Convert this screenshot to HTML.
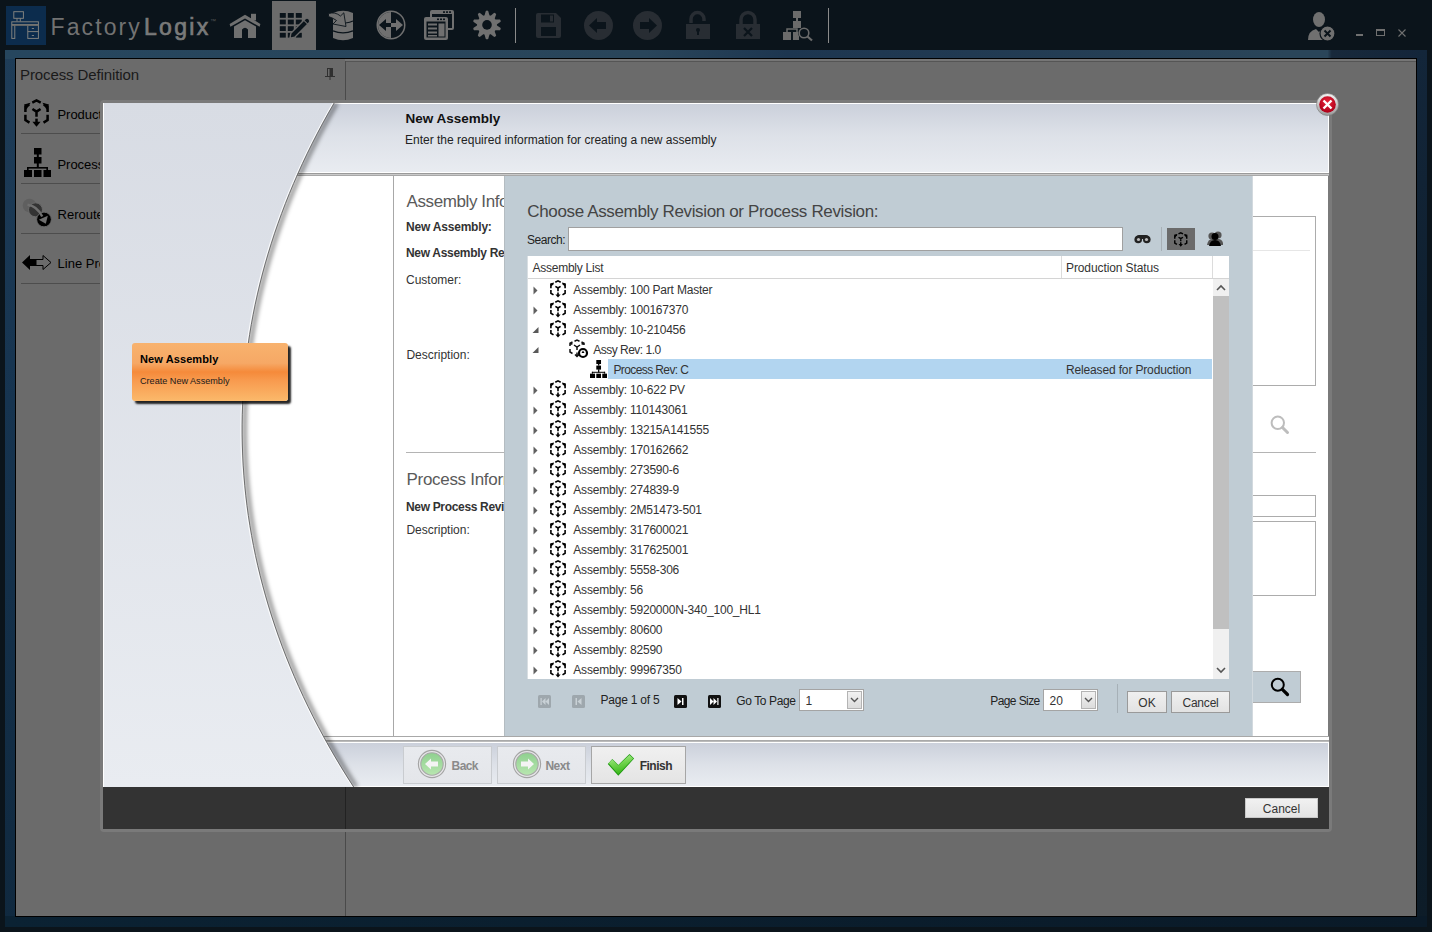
<!DOCTYPE html><html><head><meta charset="utf-8"><style>
html,body{margin:0;padding:0;width:1432px;height:932px;overflow:hidden;background:#0b141b;}
.t{position:absolute;white-space:nowrap;line-height:1;font-family:"Liberation Sans", sans-serif;}
svg{overflow:visible}
</style></head><body>
<div style="position:absolute;left:0px;top:0px;width:1432px;height:50px;background:#0b141b"></div>
<div style="position:absolute;left:6px;top:6px;width:40px;height:39px;background:#0c2c4d"></div>
<svg style="position:absolute;left:6px;top:6px;" width="40" height="39" viewBox="0 0 40 39"><g fill="none" stroke="#858480" stroke-width="0.95"><rect x="7.8" y="5.7" width="9.6" height="6.6"/><path d="M11 12.3 V15.3 M14.3 12.3 V15.3"/><rect x="5.8" y="15.8" width="26.6" height="2.8"/><rect x="5.8" y="19.2" width="3" height="13.2"/><rect x="21.8" y="19.2" width="10.6" height="13.2"/><path d="M21.8 25.6 H32.4"/></g><rect x="6" y="18.6" width="26.4" height="1.3" fill="#6a6a68"/><g fill="#858480"><rect x="25.8" y="22" width="2.2" height="0.9"/><rect x="25.8" y="29" width="2.2" height="0.9"/></g></svg>
<div class="t" style="left:50.5px;top:15.73px;font-size:23px;color:#727272;font-weight:normal;letter-spacing:2.1px;">Factory</div>
<div class="t" style="left:144.0px;top:15.73px;font-size:23px;color:#7a7a7a;font-weight:normal;letter-spacing:2.3px;-webkit-text-stroke:0.7px #7a7a7a">Logix</div>
<div class="t" style="left:210.0px;top:17.92px;font-size:6px;color:#555;font-weight:normal;letter-spacing:0px;">&#8482;</div>
<div style="position:absolute;left:272px;top:1px;width:44px;height:49px;background:#6b6b6b"></div>
<svg style="position:absolute;left:225px;top:8px;" width="40" height="34" viewBox="0 0 40 34"><g fill="#707070"><path d="M4.6 15.9 L20 6.8 L35.4 15.9 L34.6 18.7 L20 10.4 L5.4 18.7 Z"/><rect x="26" y="5.8" width="5" height="6.6"/><path d="M9 18.4 L20 12.2 L31 18.4 V30 H23 V21.5 Q20 17.8 17 21.5 V30 H9 Z"/></g></svg>
<svg style="position:absolute;left:279px;top:12px;" width="32" height="28" viewBox="0 0 32 28"><g fill="#0b141b"><rect x="0.8" y="1.0" width="6" height="4.8"/><rect x="8.8" y="1.0" width="6" height="4.8"/><rect x="16.8" y="1.0" width="6" height="4.8"/><rect x="0.8" y="7.6" width="6" height="4.8"/><rect x="8.8" y="7.6" width="6" height="4.8"/><rect x="16.8" y="7.6" width="6" height="4.8"/><rect x="0.8" y="14.2" width="6" height="4.8"/><rect x="8.8" y="14.2" width="6" height="4.8"/><rect x="16.8" y="14.2" width="6" height="4.8"/><rect x="0.8" y="20.799999999999997" width="6" height="4.8"/><rect x="8.8" y="20.799999999999997" width="6" height="4.8"/><rect x="16.8" y="20.799999999999997" width="6" height="4.8"/></g><path d="M11 26.2 L11.85 21.25 L26.05 7.05 Q28 5.1 29.95 7.05 Q31.9 9 29.95 10.95 L15.75 25.15 Z" fill="#0b141b" stroke="#6b6b6b" stroke-width="1.4"/><path d="M24.9 8.3 L28.7 12.1" stroke="#6b6b6b" stroke-width="1.1"/></svg>
<svg style="position:absolute;left:325px;top:5px;" width="35" height="40" viewBox="0 0 35 40"><path d="M8 8 Q18 3.5 28 8 V33 Q18 37.5 8 33 Z" fill="#707070"/><path d="M8 25.8 Q18 29.8 28 25.8" stroke="#0b141b" stroke-width="1.3" fill="none"/><path d="M20.5 18 Q25 17.5 28 16" stroke="#0b141b" stroke-width="1.1" fill="none"/><path d="M3.5 8.5 Q10 6.5 15.5 11 L18.8 7.8 L21 21.5 L8 19 L11.5 15.5 Q8 13 3.5 11.5 Z" fill="#707070" stroke="#0b141b" stroke-width="0.9"/></svg>
<svg style="position:absolute;left:376px;top:10px;" width="30" height="30" viewBox="0 0 30 30"><circle cx="15" cy="15" r="14.5" fill="#707070"/><circle cx="15" cy="15" r="13" fill="#0b141b"/><path d="M15 2 A13 13 0 0 0 15 28 Z" fill="#707070"/><path d="M3 15 L10 9 V13 H15 V17 H10 V21 Z" fill="#0b141b"/><path d="M27 15 L20 9 V13 H15 V17 H20 V21 Z" fill="#707070"/></svg>
<svg style="position:absolute;left:424px;top:10px;" width="30" height="30" viewBox="0 0 30 30"><g fill="#707070"><rect x="6" y="0" width="24" height="20" rx="2"/></g><rect x="8" y="4" width="20" height="14" fill="#0b141b"/><g fill="#0b141b"><rect x="19" y="1.3" width="2" height="1.6"/><rect x="22" y="1.3" width="2" height="1.6"/><rect x="25" y="1.3" width="2" height="1.6"/></g><rect x="0" y="7" width="24" height="23" rx="2" fill="#707070"/><rect x="2.5" y="11.5" width="19" height="16" fill="#0b141b"/><g fill="#0b141b"><rect x="13" y="8.5" width="2" height="1.6"/><rect x="16" y="8.5" width="2" height="1.6"/><rect x="19" y="8.5" width="2" height="1.6"/></g><g fill="#707070"><rect x="4" y="13.5" width="9" height="2"/><rect x="4" y="17.5" width="9" height="2"/><rect x="4" y="21.5" width="9" height="2"/><rect x="4" y="25" width="9" height="1.5"/><rect x="14.5" y="13.5" width="6" height="13"/></g></svg>
<svg style="position:absolute;left:473px;top:10px;" width="28" height="30" viewBox="0 0 28 30"><g fill="#707070"><path d="M11.2 6.4 L12.8 0.9 Q14 0.3 15.2 0.9 L16.8 6.4 Z" transform="rotate(0 14 14.9)"/><path d="M11.2 6.4 L12.8 0.9 Q14 0.3 15.2 0.9 L16.8 6.4 Z" transform="rotate(36 14 14.9)"/><path d="M11.2 6.4 L12.8 0.9 Q14 0.3 15.2 0.9 L16.8 6.4 Z" transform="rotate(72 14 14.9)"/><path d="M11.2 6.4 L12.8 0.9 Q14 0.3 15.2 0.9 L16.8 6.4 Z" transform="rotate(108 14 14.9)"/><path d="M11.2 6.4 L12.8 0.9 Q14 0.3 15.2 0.9 L16.8 6.4 Z" transform="rotate(144 14 14.9)"/><path d="M11.2 6.4 L12.8 0.9 Q14 0.3 15.2 0.9 L16.8 6.4 Z" transform="rotate(180 14 14.9)"/><path d="M11.2 6.4 L12.8 0.9 Q14 0.3 15.2 0.9 L16.8 6.4 Z" transform="rotate(216 14 14.9)"/><path d="M11.2 6.4 L12.8 0.9 Q14 0.3 15.2 0.9 L16.8 6.4 Z" transform="rotate(252 14 14.9)"/><path d="M11.2 6.4 L12.8 0.9 Q14 0.3 15.2 0.9 L16.8 6.4 Z" transform="rotate(288 14 14.9)"/><path d="M11.2 6.4 L12.8 0.9 Q14 0.3 15.2 0.9 L16.8 6.4 Z" transform="rotate(324 14 14.9)"/><circle cx="14" cy="14.9" r="10"/></g><circle cx="14" cy="14.9" r="4.8" fill="#0b141b"/></svg>
<div style="position:absolute;left:515px;top:8px;width:1px;height:35px;background:#8a8a8a"></div>
<div style="position:absolute;left:828px;top:8px;width:1px;height:35px;background:#8a8a8a"></div>
<svg style="position:absolute;left:536px;top:13px;" width="25" height="25" viewBox="0 0 25 25"><path fill="#282d33" d="M2 0 H20 L25 5 V23 Q25 25 23 25 H2 Q0 25 0 23 V2 Q0 0 2 0Z"/><rect x="5" y="1.5" width="13" height="8" fill="#0b141b"/><rect x="14" y="2.5" width="3" height="6" fill="#282d33"/><rect x="5" y="14" width="15" height="9" fill="#0b141b"/></svg>
<svg style="position:absolute;left:584px;top:11px;" width="29" height="29" viewBox="0 0 29 29"><circle cx="14.5" cy="14.5" r="14.5" fill="#282d33"/><path d="M5 14.5 L13 7 V11 H22 V18 H13 V22Z" fill="#0b141b"/></svg>
<svg style="position:absolute;left:633px;top:11px;" width="29" height="29" viewBox="0 0 29 29"><circle cx="14.5" cy="14.5" r="14.5" fill="#282d33"/><path d="M24 14.5 L16 7 V11 H7 V18 H16 V22Z" fill="#0b141b"/></svg>
<svg style="position:absolute;left:686px;top:11px;" width="25" height="29" viewBox="0 0 25 29"><path d="M12 12 V8 A6.5 6.5 0 0 1 25 8 V10" fill="none" stroke="#282d33" stroke-width="3.5" transform="translate(-7,0)"/><rect x="0" y="13" width="24" height="15" fill="#282d33"/><circle cx="12" cy="19" r="2" fill="#0b141b"/><rect x="11" y="19" width="2" height="5" fill="#0b141b"/></svg>
<svg style="position:absolute;left:736px;top:11px;" width="24" height="29" viewBox="0 0 24 29"><path d="M5 13 V8.5 A7 7 0 0 1 19 8.5 V13" fill="none" stroke="#282d33" stroke-width="3.5"/><rect x="0" y="13" width="24" height="15" fill="#282d33"/><path d="M8 17 L16 25 M16 17 L8 25" stroke="#0b141b" stroke-width="2.2"/></svg>
<svg style="position:absolute;left:783px;top:11px;" width="30" height="30" viewBox="0 0 30 30"><g fill="#6b6b6b"><rect x="10" y="0" width="8" height="7"/><rect x="13" y="7" width="2" height="3"/><rect x="10" y="10" width="8" height="7"/><rect x="0" y="21" width="8" height="8"/><rect x="10" y="21" width="6" height="8"/><path d="M4 21 V18 H14 V21" fill="none" stroke="#6b6b6b" stroke-width="1.5"/></g><circle cx="21" cy="22" r="6" fill="#0b141b"/><circle cx="21" cy="22" r="4.8" fill="none" stroke="#6b6b6b" stroke-width="1.6"/><path d="M24.5 25.5 L29 29.5" stroke="#6b6b6b" stroke-width="2.2"/></svg>
<svg style="position:absolute;left:1308px;top:12px;" width="28" height="30" viewBox="0 0 28 30"><ellipse cx="11" cy="7.5" rx="6" ry="7.5" fill="#707070"/><path d="M0 28 Q0 19 8 17 L11 20 L14 17 Q20 18 22 22 V28Z" fill="#707070"/><circle cx="19.5" cy="21.5" r="7.5" fill="#707070" stroke="#0b141b" stroke-width="1.2"/><path d="M16.5 18.5 L22.5 24.5 M22.5 18.5 L16.5 24.5" stroke="#0b141b" stroke-width="2"/></svg>
<div style="position:absolute;left:1356px;top:34px;width:7px;height:2px;background:#707070"></div>
<div style="position:absolute;left:1376px;top:29px;width:9px;height:7px;border:1px solid #707070;border-top-width:2px;box-sizing:border-box"></div>
<svg style="position:absolute;left:1398px;top:29px;" width="8" height="8" viewBox="0 0 8 8"><path d="M0.5 0.5 L7.5 7.5 M7.5 0.5 L0.5 7.5" stroke="#707070" stroke-width="1.1"/></svg>
<div style="position:absolute;left:5px;top:50px;width:1422px;height:877px;background:linear-gradient(180deg,#1f3d58 0%,#163450 40%,#10293f 100%)"></div>
<div style="position:absolute;left:5px;top:50px;width:1422px;height:9px;background:linear-gradient(90deg,#26465e 0%,#29455a 45%,#1d3650 55%,#213a52 68%,#2a4559 90%,#2a4559 93%,#18293b 93.3%,#13253a 100%)"></div>
<div style="position:absolute;left:1416px;top:50px;width:11px;height:877px;background:linear-gradient(180deg,#13263a,#0f2030 30%,#0d1c28)"></div>
<div style="position:absolute;left:5px;top:916px;width:1422px;height:11px;background:linear-gradient(90deg,#0b2233,#0a1a28)"></div>
<div style="position:absolute;left:15px;top:58px;width:1402px;height:859px;background:#000"></div>
<div style="position:absolute;left:16px;top:59px;width:1400px;height:857px;background:#6b6b6b"></div>
<div class="t" style="left:20.0px;top:67.30px;font-size:15px;color:#1a1a1a;font-weight:normal;letter-spacing:-0.1px;">Process Definition</div>
<svg style="position:absolute;left:325px;top:68px;" width="10" height="12" viewBox="0 0 10 12"><path d="M2 0H8V8H10V9H5.5V12H4.5V9H0V8H2Z" fill="#303030"/><rect x="3" y="1" width="1.5" height="7" fill="#6b6b6b"/></svg>
<div style="position:absolute;left:345px;top:59px;width:1px;height:857px;background:#4a4a4a"></div>
<div style="position:absolute;left:346px;top:61px;width:1070px;height:1px;background:#555"></div>
<div style="position:absolute;left:345px;top:59px;width:1071px;height:2px;background:#767676"></div>
<svg style="position:absolute;left:24px;top:99px;" width="25" height="28.5" viewBox="0 0 25 28.5"><svg x="0" y="0" width="25" height="28.5" viewBox="0 0 16 18" preserveAspectRatio="none"><g fill="none" stroke="#000" stroke-width="1.6"><path d="M5.3 2.3 L8 0.9 L10.7 2.3"/><path d="M0.9 8.2 V4.8 L3.4 3.5"/><path d="M15.1 8.2 V4.8 L12.6 3.5"/><path d="M0.9 10 V13.3 L3.5 14.9"/><path d="M15.1 10 V13.3 L12.5 14.9"/><path d="M5.4 6.3 L8 8 L10.6 6.3 M8 8 V11.2"/><path d="M8 12.4 V16"/></g><g fill="#000"><path d="M0 3.4 L4.2 2.4 L1.6 6.6 Z"/><path d="M16 3.4 L11.8 2.4 L14.4 6.6 Z"/><path d="M5.4 14.4 H10.6 L8 17.6 Z"/></g></svg></svg>
<div class="t" style="left:57.4px;top:107.80px;font-size:13px;color:#000;font-weight:normal;letter-spacing:0px;">Product</div>
<div style="position:absolute;left:21px;top:133px;width:320px;height:1px;background:#4d4d4d"></div>
<svg style="position:absolute;left:23.5px;top:148px;" width="27" height="29" viewBox="0 0 27 29"><g fill="#000" transform="scale(1.0000,1.0000)"><rect x="10" y="0" width="7.5" height="6.5"/><rect x="12.8" y="6" width="2" height="3"/><rect x="10" y="9" width="7.5" height="6.5"/><rect x="12.8" y="15" width="2" height="5"/><rect x="3" y="19" width="21" height="1.6"/><rect x="3" y="19" width="1.6" height="3"/><rect x="22.4" y="19" width="1.6" height="3"/><rect x="0" y="22" width="8" height="7"/><rect x="10" y="22" width="7.5" height="7"/><rect x="19.5" y="22" width="7.5" height="7"/></g></svg>
<div class="t" style="left:57.4px;top:157.70px;font-size:13px;color:#000;font-weight:normal;letter-spacing:0px;">Process</div>
<div style="position:absolute;left:21px;top:183px;width:320px;height:1px;background:#4d4d4d"></div>
<svg style="position:absolute;left:20px;top:195px;" width="35" height="35" viewBox="0 0 35 35"><circle cx="9.5" cy="10.5" r="6.8" fill="#5f5f5f"/><circle cx="15.5" cy="14.8" r="7" fill="#333" stroke="#6b6b6b" stroke-width="1"/><circle cx="24" cy="24.5" r="7.4" fill="#000" stroke="#6b6b6b" stroke-width="1"/><path d="M7.5 9.8 Q17 11 22.2 21.5" stroke="#6f6f6f" stroke-width="2.4" fill="none"/><path d="M18.8 24.8 L27.8 20.8 L25.8 28.8 Z" fill="#6f6f6f"/></svg>
<div class="t" style="left:57.6px;top:207.70px;font-size:13px;color:#000;font-weight:normal;letter-spacing:0px;">Reroute</div>
<div style="position:absolute;left:21px;top:233px;width:320px;height:1px;background:#4d4d4d"></div>
<svg style="position:absolute;left:22px;top:255px;" width="30" height="15" viewBox="0 0 30 15"><path d="M0 7.5 L8 0 V4 H14 V11 H8 V15 Z" fill="#000"/><path d="M29 7.5 L21 0.5 V4.5 H14 V10.5 H21 V14.5 Z" fill="none" stroke="#000" stroke-width="1"/></svg>
<div class="t" style="left:57.6px;top:257.40px;font-size:13px;color:#000;font-weight:normal;letter-spacing:0px;">Line Production</div>
<div style="position:absolute;left:21px;top:283px;width:320px;height:1px;background:#4d4d4d"></div>
<div style="position:absolute;left:100px;top:100px;width:1232px;height:732px;background:#7a7a7a;border-radius:4px"></div>
<div style="position:absolute;left:103px;top:103px;width:1226px;height:70px;background:linear-gradient(180deg,#cbd0db 0%,#dde1e8 45%,#e9ecf1 100%);border-top:1px solid #fff;box-sizing:border-box;border-right:1px solid #fff"></div>
<div style="position:absolute;left:103px;top:172px;width:1226px;height:1px;background:#fff"></div>
<div style="position:absolute;left:103px;top:173px;width:1226px;height:1px;background:#9a9a9a"></div>
<div style="position:absolute;left:103px;top:174px;width:1226px;height:1px;background:#cacaca"></div>
<div style="position:absolute;left:103px;top:175px;width:1226px;height:1px;background:#a8a8a8"></div>
<div style="position:absolute;left:103px;top:176px;width:1225px;height:560px;background:#fff"></div>
<div style="position:absolute;left:103px;top:736px;width:1226px;height:1px;background:#a8a8a8"></div>
<div style="position:absolute;left:103px;top:737px;width:1226px;height:3px;background:#fff"></div>
<div style="position:absolute;left:103px;top:740px;width:1226px;height:2px;background:linear-gradient(180deg,#a0a0a0,#c4c4c4)"></div>
<div style="position:absolute;left:103px;top:742px;width:1226px;height:45px;background:linear-gradient(180deg,#cbd0db 0%,#dde1e8 50%,#e9ecf1 100%);border:1px solid #fff;border-left:none;box-sizing:border-box"></div>
<div style="position:absolute;left:103px;top:787px;width:1226px;height:42px;background:#333333"></div>
<div style="position:absolute;left:345px;top:787px;width:1px;height:42px;background:#222"></div>
<div class="t" style="left:1245px;top:798px;width:73px;height:20px;box-sizing:border-box;background:linear-gradient(180deg,#f1f1f1,#e3e3e3);border:1px solid #c8c8c8;text-align:center;font-size:12px;line-height:18px;padding-top:1px;color:#333">Cancel</div>
<svg style="position:absolute;left:103px;top:103px;overflow:hidden" width="1226" height="684" viewBox="0 0 1226 684"><defs><linearGradient id="lg" x1="0" y1="0" x2="0" y2="1"><stop offset="0" stop-color="#d8dce4"/><stop offset="1" stop-color="#e9ecf1"/></linearGradient><filter id="sh" x="-10%" y="-10%" width="130%" height="120%"><feGaussianBlur stdDeviation="2.2"/></filter></defs><path d="M230.72 0.00 L224.95 10.06 L219.39 20.12 L214.02 30.18 L208.86 40.24 L203.89 50.29 L199.12 60.35 L194.54 70.41 L190.15 80.47 L185.95 90.53 L181.93 100.59 L178.11 110.65 L174.46 120.71 L171.00 130.76 L167.72 140.82 L164.62 150.88 L161.70 160.94 L158.95 171.00 L156.39 181.06 L154.00 191.12 L151.78 201.18 L149.74 211.24 L147.87 221.29 L146.18 231.35 L144.66 241.41 L143.31 251.47 L142.13 261.53 L141.12 271.59 L140.28 281.65 L139.62 291.71 L139.12 301.76 L138.79 311.82 L138.64 321.88 L138.65 331.94 L138.83 342.00 L139.18 352.06 L139.70 362.12 L140.40 372.18 L141.26 382.24 L142.29 392.29 L143.49 402.35 L144.87 412.41 L146.42 422.47 L148.14 432.53 L150.03 442.59 L152.09 452.65 L154.34 462.71 L156.75 472.76 L159.34 482.82 L162.11 492.88 L165.06 502.94 L168.19 513.00 L171.49 523.06 L174.98 533.12 L178.65 543.18 L182.51 553.24 L186.55 563.29 L190.78 573.35 L195.19 583.41 L199.80 593.47 L204.60 603.53 L209.60 613.59 L214.79 623.65 L220.18 633.71 L225.78 643.76 L231.57 653.82 L237.57 663.88 L243.79 673.94 L250.21 684.00" transform="translate(3,0)" fill="none" stroke="#000" stroke-opacity="0.45" stroke-width="4" filter="url(#sh)"/><path d="M0 0 L230.72 0.00 L224.95 10.06 L219.39 20.12 L214.02 30.18 L208.86 40.24 L203.89 50.29 L199.12 60.35 L194.54 70.41 L190.15 80.47 L185.95 90.53 L181.93 100.59 L178.11 110.65 L174.46 120.71 L171.00 130.76 L167.72 140.82 L164.62 150.88 L161.70 160.94 L158.95 171.00 L156.39 181.06 L154.00 191.12 L151.78 201.18 L149.74 211.24 L147.87 221.29 L146.18 231.35 L144.66 241.41 L143.31 251.47 L142.13 261.53 L141.12 271.59 L140.28 281.65 L139.62 291.71 L139.12 301.76 L138.79 311.82 L138.64 321.88 L138.65 331.94 L138.83 342.00 L139.18 352.06 L139.70 362.12 L140.40 372.18 L141.26 382.24 L142.29 392.29 L143.49 402.35 L144.87 412.41 L146.42 422.47 L148.14 432.53 L150.03 442.59 L152.09 452.65 L154.34 462.71 L156.75 472.76 L159.34 482.82 L162.11 492.88 L165.06 502.94 L168.19 513.00 L171.49 523.06 L174.98 533.12 L178.65 543.18 L182.51 553.24 L186.55 563.29 L190.78 573.35 L195.19 583.41 L199.80 593.47 L204.60 603.53 L209.60 613.59 L214.79 623.65 L220.18 633.71 L225.78 643.76 L231.57 653.82 L237.57 663.88 L243.79 673.94 L250.21 684.00 L0 684 Z" fill="url(#lg)"/><path d="M230.72 0.00 L224.95 10.06 L219.39 20.12 L214.02 30.18 L208.86 40.24 L203.89 50.29 L199.12 60.35 L194.54 70.41 L190.15 80.47 L185.95 90.53 L181.93 100.59 L178.11 110.65 L174.46 120.71 L171.00 130.76 L167.72 140.82 L164.62 150.88 L161.70 160.94 L158.95 171.00 L156.39 181.06 L154.00 191.12 L151.78 201.18 L149.74 211.24 L147.87 221.29 L146.18 231.35 L144.66 241.41 L143.31 251.47 L142.13 261.53 L141.12 271.59 L140.28 281.65 L139.62 291.71 L139.12 301.76 L138.79 311.82 L138.64 321.88 L138.65 331.94 L138.83 342.00 L139.18 352.06 L139.70 362.12 L140.40 372.18 L141.26 382.24 L142.29 392.29 L143.49 402.35 L144.87 412.41 L146.42 422.47 L148.14 432.53 L150.03 442.59 L152.09 452.65 L154.34 462.71 L156.75 472.76 L159.34 482.82 L162.11 492.88 L165.06 502.94 L168.19 513.00 L171.49 523.06 L174.98 533.12 L178.65 543.18 L182.51 553.24 L186.55 563.29 L190.78 573.35 L195.19 583.41 L199.80 593.47 L204.60 603.53 L209.60 613.59 L214.79 623.65 L220.18 633.71 L225.78 643.76 L231.57 653.82 L237.57 663.88 L243.79 673.94 L250.21 684.00" transform="translate(-0.8,0)" fill="none" stroke="#fff" stroke-width="0.9"/><path d="M230.72 0.00 L224.95 10.06 L219.39 20.12 L214.02 30.18 L208.86 40.24 L203.89 50.29 L199.12 60.35 L194.54 70.41 L190.15 80.47 L185.95 90.53 L181.93 100.59 L178.11 110.65 L174.46 120.71 L171.00 130.76 L167.72 140.82 L164.62 150.88 L161.70 160.94 L158.95 171.00 L156.39 181.06 L154.00 191.12 L151.78 201.18 L149.74 211.24 L147.87 221.29 L146.18 231.35 L144.66 241.41 L143.31 251.47 L142.13 261.53 L141.12 271.59 L140.28 281.65 L139.62 291.71 L139.12 301.76 L138.79 311.82 L138.64 321.88 L138.65 331.94 L138.83 342.00 L139.18 352.06 L139.70 362.12 L140.40 372.18 L141.26 382.24 L142.29 392.29 L143.49 402.35 L144.87 412.41 L146.42 422.47 L148.14 432.53 L150.03 442.59 L152.09 452.65 L154.34 462.71 L156.75 472.76 L159.34 482.82 L162.11 492.88 L165.06 502.94 L168.19 513.00 L171.49 523.06 L174.98 533.12 L178.65 543.18 L182.51 553.24 L186.55 563.29 L190.78 573.35 L195.19 583.41 L199.80 593.47 L204.60 603.53 L209.60 613.59 L214.79 623.65 L220.18 633.71 L225.78 643.76 L231.57 653.82 L237.57 663.88 L243.79 673.94 L250.21 684.00" transform="translate(0.5,0)" fill="none" stroke="#6e6e6e" stroke-width="1"/><rect x="0" y="0" width="1" height="684" fill="#fff"/></svg>
<div class="t" style="left:405.4px;top:111.57px;font-size:13.5px;color:#111;font-weight:bold;letter-spacing:0px;">New Assembly</div>
<div class="t" style="left:405.0px;top:133.84px;font-size:12px;color:#222;font-weight:normal;letter-spacing:0px;">Enter the required information for creating a new assembly</div>
<div style="position:absolute;left:132px;top:343px;width:156px;height:58px;border-radius:3px;background:linear-gradient(180deg,#f8b26e 0%,#f6a865 35%,#f58a3a 50%,#f89b4f 65%,#fbb96b 100%);box-shadow:3px 3px 2px rgba(0,0,0,0.85)"></div>
<div class="t" style="left:140.0px;top:353.69px;font-size:11px;color:#000;font-weight:bold;letter-spacing:0.1px;">New Assembly</div>
<div class="t" style="left:140.0px;top:376.90px;font-size:9.1px;color:#1a1a1a;font-weight:normal;letter-spacing:0px;">Create New Assembly</div>
<div style="position:absolute;left:393px;top:176px;width:1px;height:561px;background:#a8a8a8"></div>
<div class="t" style="left:406.5px;top:192.61px;font-size:17px;color:#5a5a5a;font-weight:normal;letter-spacing:-0.4px;">Assembly Information</div>
<div class="t" style="left:406.0px;top:221.24px;font-size:12px;color:#333;font-weight:bold;letter-spacing:-0.2px;">New Assembly:</div>
<div class="t" style="left:406.0px;top:247.44px;font-size:12px;color:#333;font-weight:bold;letter-spacing:-0.3px;">New Assembly Revision:</div>
<div class="t" style="left:406.0px;top:273.54px;font-size:12px;color:#333;font-weight:normal;letter-spacing:0px;">Customer:</div>
<div class="t" style="left:406.4px;top:348.54px;font-size:12px;color:#333;font-weight:normal;letter-spacing:0px;">Description:</div>
<div style="position:absolute;left:406px;top:452px;width:910px;height:1px;background:#b4b4b4"></div>
<div class="t" style="left:406.5px;top:471.21px;font-size:17px;color:#5a5a5a;font-weight:normal;letter-spacing:-0.3px;">Process Information</div>
<div class="t" style="left:406.0px;top:500.64px;font-size:12px;color:#333;font-weight:bold;letter-spacing:-0.33px;">New Process Revision:</div>
<div class="t" style="left:406.4px;top:523.74px;font-size:12px;color:#333;font-weight:normal;letter-spacing:0px;">Description:</div>
<div style="position:absolute;left:1200px;top:216px;width:116px;height:170px;border:1px solid #acacac;box-sizing:border-box;background:#fff"></div>
<div style="position:absolute;left:1200px;top:250px;width:110px;height:1px;background:#e6e6e6"></div>
<svg style="position:absolute;left:1270px;top:415px;" width="20" height="20" viewBox="0 0 20 20"><circle cx="7.8" cy="7.8" r="6.2" fill="none" stroke="#bdbdbd" stroke-width="2"/><path d="M12.5 12.5 L17.5 17.5" stroke="#bdbdbd" stroke-width="3" stroke-linecap="round"/></svg>
<div style="position:absolute;left:1200px;top:495px;width:116px;height:22px;border:1px solid #acacac;box-sizing:border-box;background:#fff"></div>
<div style="position:absolute;left:1200px;top:521px;width:116px;height:75px;border:1px solid #acacac;box-sizing:border-box;background:#fff"></div>
<div style="position:absolute;left:1200px;top:671px;width:101px;height:32px;border:1px solid #acacac;box-sizing:border-box;background:#c0ccd4"></div>
<svg style="position:absolute;left:1270px;top:677px;" width="20" height="20" viewBox="0 0 20 20"><circle cx="7.8" cy="7.8" r="6" fill="none" stroke="#000" stroke-width="2"/><path d="M12.3 12.3 L17.5 17.5" stroke="#000" stroke-width="3.2" stroke-linecap="round"/></svg>
<div style="position:absolute;left:403px;top:746px;width:89px;height:38px;box-sizing:border-box;border:1px solid #c9ccd0;background:linear-gradient(180deg,#e8eaee,#e4e6ea)"></div>
<div style="position:absolute;left:497px;top:746px;width:89px;height:38px;box-sizing:border-box;border:1px solid #c9ccd0;background:linear-gradient(180deg,#e8eaee,#e4e6ea)"></div>
<div style="position:absolute;left:591px;top:746px;width:95px;height:38px;box-sizing:border-box;border:1px solid #a6a6a6;background:linear-gradient(180deg,#f0f0f0,#e4e4e4)"></div>
<svg style="position:absolute;left:418.3px;top:750.3px;" width="28" height="28" viewBox="0 0 28 28"><defs><linearGradient id="gg" x1="0" y1="0" x2="0" y2="1"><stop offset="0" stop-color="#8fd08f"/><stop offset="1" stop-color="#b8e6b0"/></linearGradient></defs><circle cx="14" cy="14" r="13.6" fill="#e6e6e8" stroke="#a4a4a4" stroke-width="1.1"/><circle cx="14" cy="14" r="11.2" fill="url(#gg)" stroke="#a8a8a8" stroke-width="1.1"/><path d="M7 14 L13 8.5 V11.5 H20 V16.5 H13 V19.5 Z" fill="#f4f4f4"/></svg>
<div class="t" style="left:451.6px;top:760.24px;font-size:12px;color:#8a8a8a;font-weight:bold;letter-spacing:-0.6px;">Back</div>
<svg style="position:absolute;left:512.6px;top:750.3px;" width="28" height="28" viewBox="0 0 28 28"><defs><linearGradient id="gg" x1="0" y1="0" x2="0" y2="1"><stop offset="0" stop-color="#8fd08f"/><stop offset="1" stop-color="#b8e6b0"/></linearGradient></defs><circle cx="14" cy="14" r="13.6" fill="#e6e6e8" stroke="#a4a4a4" stroke-width="1.1"/><circle cx="14" cy="14" r="11.2" fill="url(#gg)" stroke="#a8a8a8" stroke-width="1.1"/><path d="M21 14 L15 8.5 V11.5 H8 V16.5 H15 V19.5 Z" fill="#f4f4f4"/></svg>
<div class="t" style="left:545.4px;top:760.24px;font-size:12px;color:#8a8a8a;font-weight:bold;letter-spacing:-0.5px;">Next</div>
<svg style="position:absolute;left:607px;top:754px;" width="28" height="23" viewBox="0 0 28 23"><defs><linearGradient id="ck" x1="0" y1="0" x2="0.3" y2="1"><stop offset="0" stop-color="#c8f0b8"/><stop offset="0.45" stop-color="#7ad858"/><stop offset="1" stop-color="#3cb81c"/></linearGradient></defs><path d="M0.8 9.9 L5.3 5 L11.3 10.9 L22.5 0.1 L27.1 4.6 L11.3 21.7 Z" fill="#1e9a10"/><path d="M1.6 9.3 L5.3 5.6 L11.3 11.4 L22.5 0.9 L26.3 4.4 L11.3 20.2 Z" fill="url(#ck)"/></svg>
<div class="t" style="left:639.7px;top:760.24px;font-size:12px;color:#333;font-weight:bold;letter-spacing:-0.5px;">Finish</div>
<div style="position:absolute;left:504px;top:176px;width:749px;height:560px;background:#c0ccd4;border-left:1px solid #b4bcc1;border-right:1px solid #d2d9de;box-sizing:border-box"></div>
<div class="t" style="left:527.3px;top:203.31px;font-size:17px;color:#444;font-weight:normal;letter-spacing:-0.35px;">Choose Assembly Revision or Process Revision:</div>
<div class="t" style="left:527.0px;top:234.04px;font-size:12px;color:#222;font-weight:normal;letter-spacing:-0.45px;">Search:</div>
<div style="position:absolute;left:568px;top:227px;width:555px;height:24px;background:#fff;border:1px solid #a0a0a0;box-sizing:border-box"></div>
<svg style="position:absolute;left:1134px;top:234px;" width="17" height="10" viewBox="0 0 17 10"><path d="M1 5 Q2 1 5 1 L12 1 Q15 1 16 5 Z" fill="#222"/><circle cx="4.2" cy="5.5" r="3.8" fill="#222"/><circle cx="12.8" cy="5.5" r="3.8" fill="#222"/><circle cx="4.5" cy="5.5" r="1.6" fill="#bbb"/><circle cx="12.5" cy="5.5" r="1.6" fill="#bbb"/></svg>
<div style="position:absolute;left:1161px;top:227px;width:1px;height:24px;background:#a8b0b6"></div>
<div style="position:absolute;left:1167px;top:228px;width:28px;height:22px;background:#6b6b6b"></div>
<svg style="position:absolute;left:1174px;top:232px;" width="13.5" height="15" viewBox="0 0 13.5 15"><svg x="0" y="0" width="13.5" height="15" viewBox="0 0 16 18" preserveAspectRatio="none"><g fill="none" stroke="#000" stroke-width="1.7"><path d="M5.3 2.3 L8 0.9 L10.7 2.3"/><path d="M0.9 8.2 V4.8 L3.4 3.5"/><path d="M15.1 8.2 V4.8 L12.6 3.5"/><path d="M0.9 10 V13.3 L3.5 14.9"/><path d="M15.1 10 V13.3 L12.5 14.9"/><path d="M5.4 6.3 L8 8 L10.6 6.3 M8 8 V11.2"/><path d="M8 12.4 V16"/></g><g fill="#000"><path d="M0 3.4 L4.2 2.4 L1.6 6.6 Z"/><path d="M16 3.4 L11.8 2.4 L14.4 6.6 Z"/><path d="M5.4 14.4 H10.6 L8 17.6 Z"/></g></svg></svg>
<svg style="position:absolute;left:1207px;top:231px;" width="16" height="15" viewBox="0 0 16 15"><circle cx="5" cy="5" r="3.6" fill="#555"/><circle cx="11" cy="4" r="3.6" fill="#555"/><path d="M0 14 Q1 8 5 8 H11 Q15 8 16 12 V14Z" fill="#555"/><circle cx="8" cy="5.5" r="3.5" fill="#000"/><path d="M2 15 Q3 9 8 9 Q13 9 14 15 Z" fill="#000"/></svg>
<div style="position:absolute;left:527px;top:256px;width:702px;height:423px;background:#fff;border-left:1px solid #d8dee2;box-sizing:border-box"></div>
<div class="t" style="left:532.5px;top:261.64px;font-size:12px;color:#333;font-weight:normal;letter-spacing:-0.25px;">Assembly List</div>
<div class="t" style="left:1066.0px;top:261.64px;font-size:12px;color:#333;font-weight:normal;letter-spacing:-0.1px;">Production Status</div>
<div style="position:absolute;left:1061px;top:256px;width:1px;height:22px;background:#dcdcdc"></div>
<div style="position:absolute;left:1212px;top:256px;width:1px;height:22px;background:#dcdcdc"></div>
<div style="position:absolute;left:528px;top:278px;width:701px;height:1px;background:#d4d4d4"></div>
<div style="position:absolute;left:1213px;top:279px;width:16px;height:400px;background:#f0f0f0"></div>
<div style="position:absolute;left:1213px;top:296px;width:16px;height:333px;background:#c0c0c0"></div>
<svg style="position:absolute;left:1215px;top:283px;" width="12" height="10" viewBox="0 0 12 10"><path d="M2 7 L6 3 L10 7" fill="none" stroke="#555" stroke-width="1.6"/></svg>
<svg style="position:absolute;left:1215px;top:665px;" width="12" height="10" viewBox="0 0 12 10"><path d="M2 3 L6 7 L10 3" fill="none" stroke="#555" stroke-width="1.6"/></svg>
<svg style="position:absolute;left:533px;top:286px;" width="5" height="9" viewBox="0 0 5 9"><path d="M0.5 0.5 L4.5 4.5 L0.5 8.5 Z" fill="#606060"/></svg>
<svg style="position:absolute;left:550px;top:280px;" width="16" height="18" viewBox="0 0 16 18"><svg x="0" y="0" width="16" height="18" viewBox="0 0 16 18" preserveAspectRatio="none"><g fill="none" stroke="#000" stroke-width="1.6"><path d="M5.3 2.3 L8 0.9 L10.7 2.3"/><path d="M0.9 8.2 V4.8 L3.4 3.5"/><path d="M15.1 8.2 V4.8 L12.6 3.5"/><path d="M0.9 10 V13.3 L3.5 14.9"/><path d="M15.1 10 V13.3 L12.5 14.9"/><path d="M5.4 6.3 L8 8 L10.6 6.3 M8 8 V11.2"/><path d="M8 12.4 V16"/></g><g fill="#000"><path d="M0 3.4 L4.2 2.4 L1.6 6.6 Z"/><path d="M16 3.4 L11.8 2.4 L14.4 6.6 Z"/><path d="M5.4 14.4 H10.6 L8 17.6 Z"/></g></svg></svg>
<div class="t" style="left:573.3px;top:283.84px;font-size:12px;color:#333;font-weight:normal;letter-spacing:-0.2px;">Assembly: 100 Part Master</div>
<svg style="position:absolute;left:533px;top:306px;" width="5" height="9" viewBox="0 0 5 9"><path d="M0.5 0.5 L4.5 4.5 L0.5 8.5 Z" fill="#606060"/></svg>
<svg style="position:absolute;left:550px;top:300px;" width="16" height="18" viewBox="0 0 16 18"><svg x="0" y="0" width="16" height="18" viewBox="0 0 16 18" preserveAspectRatio="none"><g fill="none" stroke="#000" stroke-width="1.6"><path d="M5.3 2.3 L8 0.9 L10.7 2.3"/><path d="M0.9 8.2 V4.8 L3.4 3.5"/><path d="M15.1 8.2 V4.8 L12.6 3.5"/><path d="M0.9 10 V13.3 L3.5 14.9"/><path d="M15.1 10 V13.3 L12.5 14.9"/><path d="M5.4 6.3 L8 8 L10.6 6.3 M8 8 V11.2"/><path d="M8 12.4 V16"/></g><g fill="#000"><path d="M0 3.4 L4.2 2.4 L1.6 6.6 Z"/><path d="M16 3.4 L11.8 2.4 L14.4 6.6 Z"/><path d="M5.4 14.4 H10.6 L8 17.6 Z"/></g></svg></svg>
<div class="t" style="left:573.3px;top:303.84px;font-size:12px;color:#333;font-weight:normal;letter-spacing:-0.2px;">Assembly: 100167370</div>
<svg style="position:absolute;left:532px;top:327px;" width="7" height="7" viewBox="0 0 7 7"><path d="M6.5 0 V6 H0.5 Z" fill="#595959"/></svg>
<svg style="position:absolute;left:550px;top:320px;" width="16" height="18" viewBox="0 0 16 18"><svg x="0" y="0" width="16" height="18" viewBox="0 0 16 18" preserveAspectRatio="none"><g fill="none" stroke="#000" stroke-width="1.6"><path d="M5.3 2.3 L8 0.9 L10.7 2.3"/><path d="M0.9 8.2 V4.8 L3.4 3.5"/><path d="M15.1 8.2 V4.8 L12.6 3.5"/><path d="M0.9 10 V13.3 L3.5 14.9"/><path d="M15.1 10 V13.3 L12.5 14.9"/><path d="M5.4 6.3 L8 8 L10.6 6.3 M8 8 V11.2"/><path d="M8 12.4 V16"/></g><g fill="#000"><path d="M0 3.4 L4.2 2.4 L1.6 6.6 Z"/><path d="M16 3.4 L11.8 2.4 L14.4 6.6 Z"/><path d="M5.4 14.4 H10.6 L8 17.6 Z"/></g></svg></svg>
<div class="t" style="left:573.3px;top:323.84px;font-size:12px;color:#333;font-weight:normal;letter-spacing:-0.2px;">Assembly: 10-210456</div>
<svg style="position:absolute;left:532px;top:347px;" width="7" height="7" viewBox="0 0 7 7"><path d="M6.5 0 V6 H0.5 Z" fill="#595959"/></svg>
<svg style="position:absolute;left:569px;top:339px;" width="19" height="19" viewBox="0 0 19 19"><g fill="none" stroke="#111" stroke-width="1.5"><path d="M5.5 2.2 L8 1 L10.5 2.2"/><path d="M1 7 V4.2 L3.5 3 M3.5 5 L1 4.2"/><path d="M15 6 V4.2 L12.5 3 M12.5 5 L15 4.2"/><path d="M1 10 V13 L3.5 14.5"/><path d="M5 6 L8 8 L11 6 M8 8 V11"/><path d="M8 13.5 V17.5 M6 15.5 L8 17.5 L10 15.5"/></g><circle cx="14" cy="14" r="4" fill="#fff" stroke="#000" stroke-width="2.2"/><path d="M14 11.5 L12.5 14 H15.5Z" fill="#000"/></svg>
<div class="t" style="left:593.2px;top:343.84px;font-size:12px;color:#333;font-weight:normal;letter-spacing:-0.5px;">Assy Rev: 1.0</div>
<div style="position:absolute;left:608px;top:359px;width:604px;height:20px;background:#b2d5f0"></div>
<div class="t" style="left:1066.0px;top:363.84px;font-size:12px;color:#333;font-weight:normal;letter-spacing:-0.15px;">Released for Production</div>
<svg style="position:absolute;left:589.5px;top:360px;" width="17" height="18" viewBox="0 0 17 18"><g fill="#000" transform="scale(0.6296,0.6207)"><rect x="10" y="0" width="7.5" height="6.5"/><rect x="12.8" y="6" width="2" height="3"/><rect x="10" y="9" width="7.5" height="6.5"/><rect x="12.8" y="15" width="2" height="5"/><rect x="3" y="19" width="21" height="1.6"/><rect x="3" y="19" width="1.6" height="3"/><rect x="22.4" y="19" width="1.6" height="3"/><rect x="0" y="22" width="8" height="7"/><rect x="10" y="22" width="7.5" height="7"/><rect x="19.5" y="22" width="7.5" height="7"/></g></svg>
<div class="t" style="left:613.4px;top:363.84px;font-size:12px;color:#333;font-weight:normal;letter-spacing:-0.6px;">Process Rev: C</div>
<svg style="position:absolute;left:533px;top:386px;" width="5" height="9" viewBox="0 0 5 9"><path d="M0.5 0.5 L4.5 4.5 L0.5 8.5 Z" fill="#606060"/></svg>
<svg style="position:absolute;left:550px;top:380px;" width="16" height="18" viewBox="0 0 16 18"><svg x="0" y="0" width="16" height="18" viewBox="0 0 16 18" preserveAspectRatio="none"><g fill="none" stroke="#000" stroke-width="1.6"><path d="M5.3 2.3 L8 0.9 L10.7 2.3"/><path d="M0.9 8.2 V4.8 L3.4 3.5"/><path d="M15.1 8.2 V4.8 L12.6 3.5"/><path d="M0.9 10 V13.3 L3.5 14.9"/><path d="M15.1 10 V13.3 L12.5 14.9"/><path d="M5.4 6.3 L8 8 L10.6 6.3 M8 8 V11.2"/><path d="M8 12.4 V16"/></g><g fill="#000"><path d="M0 3.4 L4.2 2.4 L1.6 6.6 Z"/><path d="M16 3.4 L11.8 2.4 L14.4 6.6 Z"/><path d="M5.4 14.4 H10.6 L8 17.6 Z"/></g></svg></svg>
<div class="t" style="left:573.3px;top:383.84px;font-size:12px;color:#333;font-weight:normal;letter-spacing:-0.2px;">Assembly: 10-622 PV</div>
<svg style="position:absolute;left:533px;top:406px;" width="5" height="9" viewBox="0 0 5 9"><path d="M0.5 0.5 L4.5 4.5 L0.5 8.5 Z" fill="#606060"/></svg>
<svg style="position:absolute;left:550px;top:400px;" width="16" height="18" viewBox="0 0 16 18"><svg x="0" y="0" width="16" height="18" viewBox="0 0 16 18" preserveAspectRatio="none"><g fill="none" stroke="#000" stroke-width="1.6"><path d="M5.3 2.3 L8 0.9 L10.7 2.3"/><path d="M0.9 8.2 V4.8 L3.4 3.5"/><path d="M15.1 8.2 V4.8 L12.6 3.5"/><path d="M0.9 10 V13.3 L3.5 14.9"/><path d="M15.1 10 V13.3 L12.5 14.9"/><path d="M5.4 6.3 L8 8 L10.6 6.3 M8 8 V11.2"/><path d="M8 12.4 V16"/></g><g fill="#000"><path d="M0 3.4 L4.2 2.4 L1.6 6.6 Z"/><path d="M16 3.4 L11.8 2.4 L14.4 6.6 Z"/><path d="M5.4 14.4 H10.6 L8 17.6 Z"/></g></svg></svg>
<div class="t" style="left:573.3px;top:403.84px;font-size:12px;color:#333;font-weight:normal;letter-spacing:-0.2px;">Assembly: 110143061</div>
<svg style="position:absolute;left:533px;top:426px;" width="5" height="9" viewBox="0 0 5 9"><path d="M0.5 0.5 L4.5 4.5 L0.5 8.5 Z" fill="#606060"/></svg>
<svg style="position:absolute;left:550px;top:420px;" width="16" height="18" viewBox="0 0 16 18"><svg x="0" y="0" width="16" height="18" viewBox="0 0 16 18" preserveAspectRatio="none"><g fill="none" stroke="#000" stroke-width="1.6"><path d="M5.3 2.3 L8 0.9 L10.7 2.3"/><path d="M0.9 8.2 V4.8 L3.4 3.5"/><path d="M15.1 8.2 V4.8 L12.6 3.5"/><path d="M0.9 10 V13.3 L3.5 14.9"/><path d="M15.1 10 V13.3 L12.5 14.9"/><path d="M5.4 6.3 L8 8 L10.6 6.3 M8 8 V11.2"/><path d="M8 12.4 V16"/></g><g fill="#000"><path d="M0 3.4 L4.2 2.4 L1.6 6.6 Z"/><path d="M16 3.4 L11.8 2.4 L14.4 6.6 Z"/><path d="M5.4 14.4 H10.6 L8 17.6 Z"/></g></svg></svg>
<div class="t" style="left:573.3px;top:423.84px;font-size:12px;color:#333;font-weight:normal;letter-spacing:-0.2px;">Assembly: 13215A141555</div>
<svg style="position:absolute;left:533px;top:446px;" width="5" height="9" viewBox="0 0 5 9"><path d="M0.5 0.5 L4.5 4.5 L0.5 8.5 Z" fill="#606060"/></svg>
<svg style="position:absolute;left:550px;top:440px;" width="16" height="18" viewBox="0 0 16 18"><svg x="0" y="0" width="16" height="18" viewBox="0 0 16 18" preserveAspectRatio="none"><g fill="none" stroke="#000" stroke-width="1.6"><path d="M5.3 2.3 L8 0.9 L10.7 2.3"/><path d="M0.9 8.2 V4.8 L3.4 3.5"/><path d="M15.1 8.2 V4.8 L12.6 3.5"/><path d="M0.9 10 V13.3 L3.5 14.9"/><path d="M15.1 10 V13.3 L12.5 14.9"/><path d="M5.4 6.3 L8 8 L10.6 6.3 M8 8 V11.2"/><path d="M8 12.4 V16"/></g><g fill="#000"><path d="M0 3.4 L4.2 2.4 L1.6 6.6 Z"/><path d="M16 3.4 L11.8 2.4 L14.4 6.6 Z"/><path d="M5.4 14.4 H10.6 L8 17.6 Z"/></g></svg></svg>
<div class="t" style="left:573.3px;top:443.84px;font-size:12px;color:#333;font-weight:normal;letter-spacing:-0.2px;">Assembly: 170162662</div>
<svg style="position:absolute;left:533px;top:466px;" width="5" height="9" viewBox="0 0 5 9"><path d="M0.5 0.5 L4.5 4.5 L0.5 8.5 Z" fill="#606060"/></svg>
<svg style="position:absolute;left:550px;top:460px;" width="16" height="18" viewBox="0 0 16 18"><svg x="0" y="0" width="16" height="18" viewBox="0 0 16 18" preserveAspectRatio="none"><g fill="none" stroke="#000" stroke-width="1.6"><path d="M5.3 2.3 L8 0.9 L10.7 2.3"/><path d="M0.9 8.2 V4.8 L3.4 3.5"/><path d="M15.1 8.2 V4.8 L12.6 3.5"/><path d="M0.9 10 V13.3 L3.5 14.9"/><path d="M15.1 10 V13.3 L12.5 14.9"/><path d="M5.4 6.3 L8 8 L10.6 6.3 M8 8 V11.2"/><path d="M8 12.4 V16"/></g><g fill="#000"><path d="M0 3.4 L4.2 2.4 L1.6 6.6 Z"/><path d="M16 3.4 L11.8 2.4 L14.4 6.6 Z"/><path d="M5.4 14.4 H10.6 L8 17.6 Z"/></g></svg></svg>
<div class="t" style="left:573.3px;top:463.84px;font-size:12px;color:#333;font-weight:normal;letter-spacing:-0.2px;">Assembly: 273590-6</div>
<svg style="position:absolute;left:533px;top:486px;" width="5" height="9" viewBox="0 0 5 9"><path d="M0.5 0.5 L4.5 4.5 L0.5 8.5 Z" fill="#606060"/></svg>
<svg style="position:absolute;left:550px;top:480px;" width="16" height="18" viewBox="0 0 16 18"><svg x="0" y="0" width="16" height="18" viewBox="0 0 16 18" preserveAspectRatio="none"><g fill="none" stroke="#000" stroke-width="1.6"><path d="M5.3 2.3 L8 0.9 L10.7 2.3"/><path d="M0.9 8.2 V4.8 L3.4 3.5"/><path d="M15.1 8.2 V4.8 L12.6 3.5"/><path d="M0.9 10 V13.3 L3.5 14.9"/><path d="M15.1 10 V13.3 L12.5 14.9"/><path d="M5.4 6.3 L8 8 L10.6 6.3 M8 8 V11.2"/><path d="M8 12.4 V16"/></g><g fill="#000"><path d="M0 3.4 L4.2 2.4 L1.6 6.6 Z"/><path d="M16 3.4 L11.8 2.4 L14.4 6.6 Z"/><path d="M5.4 14.4 H10.6 L8 17.6 Z"/></g></svg></svg>
<div class="t" style="left:573.3px;top:483.84px;font-size:12px;color:#333;font-weight:normal;letter-spacing:-0.2px;">Assembly: 274839-9</div>
<svg style="position:absolute;left:533px;top:506px;" width="5" height="9" viewBox="0 0 5 9"><path d="M0.5 0.5 L4.5 4.5 L0.5 8.5 Z" fill="#606060"/></svg>
<svg style="position:absolute;left:550px;top:500px;" width="16" height="18" viewBox="0 0 16 18"><svg x="0" y="0" width="16" height="18" viewBox="0 0 16 18" preserveAspectRatio="none"><g fill="none" stroke="#000" stroke-width="1.6"><path d="M5.3 2.3 L8 0.9 L10.7 2.3"/><path d="M0.9 8.2 V4.8 L3.4 3.5"/><path d="M15.1 8.2 V4.8 L12.6 3.5"/><path d="M0.9 10 V13.3 L3.5 14.9"/><path d="M15.1 10 V13.3 L12.5 14.9"/><path d="M5.4 6.3 L8 8 L10.6 6.3 M8 8 V11.2"/><path d="M8 12.4 V16"/></g><g fill="#000"><path d="M0 3.4 L4.2 2.4 L1.6 6.6 Z"/><path d="M16 3.4 L11.8 2.4 L14.4 6.6 Z"/><path d="M5.4 14.4 H10.6 L8 17.6 Z"/></g></svg></svg>
<div class="t" style="left:573.3px;top:503.84px;font-size:12px;color:#333;font-weight:normal;letter-spacing:-0.2px;">Assembly: 2M51473-501</div>
<svg style="position:absolute;left:533px;top:526px;" width="5" height="9" viewBox="0 0 5 9"><path d="M0.5 0.5 L4.5 4.5 L0.5 8.5 Z" fill="#606060"/></svg>
<svg style="position:absolute;left:550px;top:520px;" width="16" height="18" viewBox="0 0 16 18"><svg x="0" y="0" width="16" height="18" viewBox="0 0 16 18" preserveAspectRatio="none"><g fill="none" stroke="#000" stroke-width="1.6"><path d="M5.3 2.3 L8 0.9 L10.7 2.3"/><path d="M0.9 8.2 V4.8 L3.4 3.5"/><path d="M15.1 8.2 V4.8 L12.6 3.5"/><path d="M0.9 10 V13.3 L3.5 14.9"/><path d="M15.1 10 V13.3 L12.5 14.9"/><path d="M5.4 6.3 L8 8 L10.6 6.3 M8 8 V11.2"/><path d="M8 12.4 V16"/></g><g fill="#000"><path d="M0 3.4 L4.2 2.4 L1.6 6.6 Z"/><path d="M16 3.4 L11.8 2.4 L14.4 6.6 Z"/><path d="M5.4 14.4 H10.6 L8 17.6 Z"/></g></svg></svg>
<div class="t" style="left:573.3px;top:523.84px;font-size:12px;color:#333;font-weight:normal;letter-spacing:-0.2px;">Assembly: 317600021</div>
<svg style="position:absolute;left:533px;top:546px;" width="5" height="9" viewBox="0 0 5 9"><path d="M0.5 0.5 L4.5 4.5 L0.5 8.5 Z" fill="#606060"/></svg>
<svg style="position:absolute;left:550px;top:540px;" width="16" height="18" viewBox="0 0 16 18"><svg x="0" y="0" width="16" height="18" viewBox="0 0 16 18" preserveAspectRatio="none"><g fill="none" stroke="#000" stroke-width="1.6"><path d="M5.3 2.3 L8 0.9 L10.7 2.3"/><path d="M0.9 8.2 V4.8 L3.4 3.5"/><path d="M15.1 8.2 V4.8 L12.6 3.5"/><path d="M0.9 10 V13.3 L3.5 14.9"/><path d="M15.1 10 V13.3 L12.5 14.9"/><path d="M5.4 6.3 L8 8 L10.6 6.3 M8 8 V11.2"/><path d="M8 12.4 V16"/></g><g fill="#000"><path d="M0 3.4 L4.2 2.4 L1.6 6.6 Z"/><path d="M16 3.4 L11.8 2.4 L14.4 6.6 Z"/><path d="M5.4 14.4 H10.6 L8 17.6 Z"/></g></svg></svg>
<div class="t" style="left:573.3px;top:543.84px;font-size:12px;color:#333;font-weight:normal;letter-spacing:-0.2px;">Assembly: 317625001</div>
<svg style="position:absolute;left:533px;top:566px;" width="5" height="9" viewBox="0 0 5 9"><path d="M0.5 0.5 L4.5 4.5 L0.5 8.5 Z" fill="#606060"/></svg>
<svg style="position:absolute;left:550px;top:560px;" width="16" height="18" viewBox="0 0 16 18"><svg x="0" y="0" width="16" height="18" viewBox="0 0 16 18" preserveAspectRatio="none"><g fill="none" stroke="#000" stroke-width="1.6"><path d="M5.3 2.3 L8 0.9 L10.7 2.3"/><path d="M0.9 8.2 V4.8 L3.4 3.5"/><path d="M15.1 8.2 V4.8 L12.6 3.5"/><path d="M0.9 10 V13.3 L3.5 14.9"/><path d="M15.1 10 V13.3 L12.5 14.9"/><path d="M5.4 6.3 L8 8 L10.6 6.3 M8 8 V11.2"/><path d="M8 12.4 V16"/></g><g fill="#000"><path d="M0 3.4 L4.2 2.4 L1.6 6.6 Z"/><path d="M16 3.4 L11.8 2.4 L14.4 6.6 Z"/><path d="M5.4 14.4 H10.6 L8 17.6 Z"/></g></svg></svg>
<div class="t" style="left:573.3px;top:563.84px;font-size:12px;color:#333;font-weight:normal;letter-spacing:-0.2px;">Assembly: 5558-306</div>
<svg style="position:absolute;left:533px;top:586px;" width="5" height="9" viewBox="0 0 5 9"><path d="M0.5 0.5 L4.5 4.5 L0.5 8.5 Z" fill="#606060"/></svg>
<svg style="position:absolute;left:550px;top:580px;" width="16" height="18" viewBox="0 0 16 18"><svg x="0" y="0" width="16" height="18" viewBox="0 0 16 18" preserveAspectRatio="none"><g fill="none" stroke="#000" stroke-width="1.6"><path d="M5.3 2.3 L8 0.9 L10.7 2.3"/><path d="M0.9 8.2 V4.8 L3.4 3.5"/><path d="M15.1 8.2 V4.8 L12.6 3.5"/><path d="M0.9 10 V13.3 L3.5 14.9"/><path d="M15.1 10 V13.3 L12.5 14.9"/><path d="M5.4 6.3 L8 8 L10.6 6.3 M8 8 V11.2"/><path d="M8 12.4 V16"/></g><g fill="#000"><path d="M0 3.4 L4.2 2.4 L1.6 6.6 Z"/><path d="M16 3.4 L11.8 2.4 L14.4 6.6 Z"/><path d="M5.4 14.4 H10.6 L8 17.6 Z"/></g></svg></svg>
<div class="t" style="left:573.3px;top:583.84px;font-size:12px;color:#333;font-weight:normal;letter-spacing:-0.2px;">Assembly: 56</div>
<svg style="position:absolute;left:533px;top:606px;" width="5" height="9" viewBox="0 0 5 9"><path d="M0.5 0.5 L4.5 4.5 L0.5 8.5 Z" fill="#606060"/></svg>
<svg style="position:absolute;left:550px;top:600px;" width="16" height="18" viewBox="0 0 16 18"><svg x="0" y="0" width="16" height="18" viewBox="0 0 16 18" preserveAspectRatio="none"><g fill="none" stroke="#000" stroke-width="1.6"><path d="M5.3 2.3 L8 0.9 L10.7 2.3"/><path d="M0.9 8.2 V4.8 L3.4 3.5"/><path d="M15.1 8.2 V4.8 L12.6 3.5"/><path d="M0.9 10 V13.3 L3.5 14.9"/><path d="M15.1 10 V13.3 L12.5 14.9"/><path d="M5.4 6.3 L8 8 L10.6 6.3 M8 8 V11.2"/><path d="M8 12.4 V16"/></g><g fill="#000"><path d="M0 3.4 L4.2 2.4 L1.6 6.6 Z"/><path d="M16 3.4 L11.8 2.4 L14.4 6.6 Z"/><path d="M5.4 14.4 H10.6 L8 17.6 Z"/></g></svg></svg>
<div class="t" style="left:573.3px;top:603.84px;font-size:12px;color:#333;font-weight:normal;letter-spacing:-0.2px;">Assembly: 5920000N-340_100_HL1</div>
<svg style="position:absolute;left:533px;top:626px;" width="5" height="9" viewBox="0 0 5 9"><path d="M0.5 0.5 L4.5 4.5 L0.5 8.5 Z" fill="#606060"/></svg>
<svg style="position:absolute;left:550px;top:620px;" width="16" height="18" viewBox="0 0 16 18"><svg x="0" y="0" width="16" height="18" viewBox="0 0 16 18" preserveAspectRatio="none"><g fill="none" stroke="#000" stroke-width="1.6"><path d="M5.3 2.3 L8 0.9 L10.7 2.3"/><path d="M0.9 8.2 V4.8 L3.4 3.5"/><path d="M15.1 8.2 V4.8 L12.6 3.5"/><path d="M0.9 10 V13.3 L3.5 14.9"/><path d="M15.1 10 V13.3 L12.5 14.9"/><path d="M5.4 6.3 L8 8 L10.6 6.3 M8 8 V11.2"/><path d="M8 12.4 V16"/></g><g fill="#000"><path d="M0 3.4 L4.2 2.4 L1.6 6.6 Z"/><path d="M16 3.4 L11.8 2.4 L14.4 6.6 Z"/><path d="M5.4 14.4 H10.6 L8 17.6 Z"/></g></svg></svg>
<div class="t" style="left:573.3px;top:623.84px;font-size:12px;color:#333;font-weight:normal;letter-spacing:-0.2px;">Assembly: 80600</div>
<svg style="position:absolute;left:533px;top:646px;" width="5" height="9" viewBox="0 0 5 9"><path d="M0.5 0.5 L4.5 4.5 L0.5 8.5 Z" fill="#606060"/></svg>
<svg style="position:absolute;left:550px;top:640px;" width="16" height="18" viewBox="0 0 16 18"><svg x="0" y="0" width="16" height="18" viewBox="0 0 16 18" preserveAspectRatio="none"><g fill="none" stroke="#000" stroke-width="1.6"><path d="M5.3 2.3 L8 0.9 L10.7 2.3"/><path d="M0.9 8.2 V4.8 L3.4 3.5"/><path d="M15.1 8.2 V4.8 L12.6 3.5"/><path d="M0.9 10 V13.3 L3.5 14.9"/><path d="M15.1 10 V13.3 L12.5 14.9"/><path d="M5.4 6.3 L8 8 L10.6 6.3 M8 8 V11.2"/><path d="M8 12.4 V16"/></g><g fill="#000"><path d="M0 3.4 L4.2 2.4 L1.6 6.6 Z"/><path d="M16 3.4 L11.8 2.4 L14.4 6.6 Z"/><path d="M5.4 14.4 H10.6 L8 17.6 Z"/></g></svg></svg>
<div class="t" style="left:573.3px;top:643.84px;font-size:12px;color:#333;font-weight:normal;letter-spacing:-0.2px;">Assembly: 82590</div>
<svg style="position:absolute;left:533px;top:666px;" width="5" height="9" viewBox="0 0 5 9"><path d="M0.5 0.5 L4.5 4.5 L0.5 8.5 Z" fill="#606060"/></svg>
<svg style="position:absolute;left:550px;top:660px;" width="16" height="18" viewBox="0 0 16 18"><svg x="0" y="0" width="16" height="18" viewBox="0 0 16 18" preserveAspectRatio="none"><g fill="none" stroke="#000" stroke-width="1.6"><path d="M5.3 2.3 L8 0.9 L10.7 2.3"/><path d="M0.9 8.2 V4.8 L3.4 3.5"/><path d="M15.1 8.2 V4.8 L12.6 3.5"/><path d="M0.9 10 V13.3 L3.5 14.9"/><path d="M15.1 10 V13.3 L12.5 14.9"/><path d="M5.4 6.3 L8 8 L10.6 6.3 M8 8 V11.2"/><path d="M8 12.4 V16"/></g><g fill="#000"><path d="M0 3.4 L4.2 2.4 L1.6 6.6 Z"/><path d="M16 3.4 L11.8 2.4 L14.4 6.6 Z"/><path d="M5.4 14.4 H10.6 L8 17.6 Z"/></g></svg></svg>
<div class="t" style="left:573.3px;top:663.84px;font-size:12px;color:#333;font-weight:normal;letter-spacing:-0.2px;">Assembly: 99967350</div>
<svg style="position:absolute;left:537.5px;top:694.5px;" width="13" height="13" viewBox="0 0 13 13"><rect x="0" y="0" width="13" height="13" rx="1.5" fill="#9ea7ad"/><rect x="2.5" y="3" width="1.2" height="7" fill="#c9d1d6"/><path d="M7.5 3 L4 6.5 L7.5 10Z M11 3 L7.5 6.5 L11 10Z" fill="#c9d1d6"/></svg>
<svg style="position:absolute;left:571.5px;top:694.5px;" width="13" height="13" viewBox="0 0 13 13"><rect x="0" y="0" width="13" height="13" rx="1.5" fill="#9ea7ad"/><rect x="3.5" y="3" width="1.5" height="7" fill="#c9d1d6"/><path d="M9.5 3 L5.5 6.5 L9.5 10Z" fill="#c9d1d6"/></svg>
<div class="t" style="left:600.4px;top:694.14px;font-size:12px;color:#222;font-weight:normal;letter-spacing:-0.2px;">Page 1 of 5</div>
<svg style="position:absolute;left:674px;top:694.5px;" width="13" height="13" viewBox="0 0 13 13"><rect x="0" y="0" width="13" height="13" rx="1.5" fill="#111"/><rect x="8" y="3" width="1.5" height="7" fill="#fff"/><path d="M3.5 3 L7.5 6.5 L3.5 10Z" fill="#fff"/></svg>
<svg style="position:absolute;left:708.4px;top:694.5px;" width="13" height="13" viewBox="0 0 13 13"><rect x="0" y="0" width="13" height="13" rx="1.5" fill="#111"/><rect x="9.3" y="3" width="1.2" height="7" fill="#fff"/><path d="M2 3 L5.5 6.5 L2 10Z M5.5 3 L9 6.5 L5.5 10Z" fill="#fff"/></svg>
<div class="t" style="left:736.3px;top:694.64px;font-size:12px;color:#222;font-weight:normal;letter-spacing:-0.4px;">Go To Page</div>
<div style="position:absolute;left:799px;top:689px;width:65px;height:22px;background:#fff;border:1px solid #a4a4a4;box-sizing:border-box"></div>
<div class="t" style="left:805.5px;top:694.64px;font-size:12px;color:#333;font-weight:normal;letter-spacing:0px;">1</div>
<div style="position:absolute;left:847px;top:691px;width:15px;height:18px;background:linear-gradient(180deg,#f2f2f2,#dcdcdc);border:1px solid #b4b4b4;box-sizing:border-box"></div>
<svg style="position:absolute;left:850px;top:697px;" width="9" height="6" viewBox="0 0 9 6"><path d="M1 1 L4.5 4.5 L8 1" fill="none" stroke="#555" stroke-width="1.4"/></svg>
<div class="t" style="left:990.3px;top:694.64px;font-size:12px;color:#222;font-weight:normal;letter-spacing:-0.6px;">Page Size</div>
<div style="position:absolute;left:1043px;top:689px;width:55px;height:22px;background:#fff;border:1px solid #a4a4a4;box-sizing:border-box"></div>
<div class="t" style="left:1049.5px;top:694.64px;font-size:12px;color:#333;font-weight:normal;letter-spacing:0px;">20</div>
<div style="position:absolute;left:1081px;top:691px;width:15px;height:18px;background:linear-gradient(180deg,#f2f2f2,#dcdcdc);border:1px solid #b4b4b4;box-sizing:border-box"></div>
<svg style="position:absolute;left:1084px;top:697px;" width="9" height="6" viewBox="0 0 9 6"><path d="M1 1 L4.5 4.5 L8 1" fill="none" stroke="#555" stroke-width="1.4"/></svg>
<div style="position:absolute;left:1117px;top:684px;width:1px;height:29px;background:#a6b0b7"></div>
<div class="t" style="left:1127px;top:691px;width:40px;height:22px;box-sizing:border-box;background:linear-gradient(180deg,#f0f0f0,#e2e2e2);border:1px solid #9a9a9a;text-align:center;font-size:12px;line-height:20px;padding-top:1px;color:#333;letter-spacing:0px">OK</div>
<div class="t" style="left:1171px;top:691px;width:59px;height:22px;box-sizing:border-box;background:linear-gradient(180deg,#f0f0f0,#e2e2e2);border:1px solid #9a9a9a;text-align:center;font-size:12px;line-height:20px;padding-top:1px;color:#333;letter-spacing:-0.2px">Cancel</div>
<svg style="position:absolute;left:1316px;top:93px;" width="23" height="23" viewBox="0 0 23 23"><defs><radialGradient id="rg" cx="0.5" cy="0.35" r="0.6"><stop offset="0" stop-color="#e8253a"/><stop offset="1" stop-color="#b0001a"/></radialGradient><linearGradient id="sil" x1="0" y1="0" x2="0" y2="1"><stop offset="0" stop-color="#f4f4f4"/><stop offset="1" stop-color="#9a9a9a"/></linearGradient></defs><circle cx="11.5" cy="11.5" r="11" fill="url(#sil)" stroke="#777" stroke-width="0.6"/><circle cx="11.5" cy="11.5" r="8.3" fill="url(#rg)"/><path d="M7.5 7.5 L15.5 15.5 M15.5 7.5 L7.5 15.5" stroke="#fff" stroke-width="2.4"/></svg>
</body></html>
